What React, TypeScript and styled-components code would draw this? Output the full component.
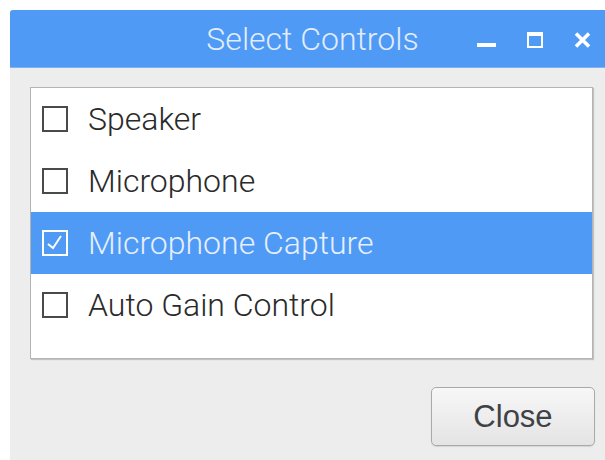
import styled, { createGlobalStyle } from 'styled-components';

const GlobalStyle = createGlobalStyle`
  html, body {
    margin: 0;
    padding: 0;
    background: #ffffff;
    overflow: hidden;
  }
  body {
    font-family: Roboto, "Noto Sans", sans-serif;
  }
`;

type Control = {
  label: string;
  checked: boolean;
};

const controls: Control[] = [
  { label: 'Speaker', checked: false },
  { label: 'Microphone', checked: false },
  { label: 'Microphone Capture', checked: true },
  { label: 'Auto Gain Control', checked: false },
];

export default function App() {
  return (
    <>
      <GlobalStyle />
      <Window>
        <TitleBar>
          <Title>Select Controls</Title>
          <WindowButtons>
            <WinButton aria-label="minimise">
              <svg width="19" height="16" viewBox="0 0 19 16">
                <rect x="0" y="11" width="19" height="4" fill="#ffffff" />
              </svg>
            </WinButton>
            <WinButton aria-label="maximise">
              <svg width="16" height="16" viewBox="0 0 16 16">
                <rect x="1" y="1" width="14" height="14" fill="none" stroke="#ffffff" strokeWidth="2" />
                <rect x="1" y="1" width="14" height="3" fill="#ffffff" />
              </svg>
            </WinButton>
            <WinButton aria-label="close">
              <svg width="17" height="16" viewBox="0 0 17 16">
                <path d="M2 1.5 L15 14.5 M15 1.5 L2 14.5" stroke="#ffffff" strokeWidth="3.6" strokeLinecap="butt" />
              </svg>
            </WinButton>
          </WindowButtons>
        </TitleBar>
        <Content>
          <List>
            {controls.map((c) => (
              <Row key={c.label} selected={c.checked}>
                <Box selected={c.checked}>
                  {c.checked && (
                    <svg width="20" height="20" viewBox="0 0 20 20">
                      <path d="M3 11 L8 15 L16 3" fill="none" stroke="#ffffff" strokeWidth="2" />
                    </svg>
                  )}
                </Box>
                <Label selected={c.checked}>{c.label}</Label>
              </Row>
            ))}
          </List>
          <Footer>
            <CloseButton>Close</CloseButton>
          </Footer>
        </Content>
      </Window>
    </>
  );
}

const Window = styled.div`
  margin: 10px 0 0 10px;
  width: 595px;
  height: 450px;
  background: #ededed;
  border-top-left-radius: 3px;
  overflow: hidden;
  display: flex;
  flex-direction: column;
`;

const TitleBar = styled.div`
  position: relative;
  height: 57px;
  background: #4e9af4;
  border-bottom: 1px solid #7fb4f0;
  display: flex;
  align-items: center;
  justify-content: center;
`;

const Title = styled.div`
  font-family: Roboto, sans-serif;
  font-size: 32px;
  font-weight: 300;
  color: #e2ecfc;
  margin-left: 10px;
`;

// minimise / maximise / close sit over the right end of the bar
const WindowButtons = styled.div`
  position: absolute;
  right: 14px;
  top: 22px;
  display: flex;
  align-items: center;
  gap: 31px;
`;

const WinButton = styled.div`
  display: flex;
  align-items: center;
  justify-content: center;
  line-height: 0;
`;

const Content = styled.div`
  flex: 1;
  padding: 19px 12px 0 20px;
  display: flex;
  flex-direction: column;
`;

const List = styled.div`
  height: 270px;
  background: #ffffff;
  border: 1px solid #b4b4b4;
  box-shadow: 1px 1px 1px rgba(0, 0, 0, 0.18);
  display: flex;
  flex-direction: column;
`;

const Row = styled.div<{ selected: boolean }>`
  height: 62px;
  display: flex;
  align-items: center;
  padding-left: 11px;
  background: ${({ selected }) => (selected ? '#4e9af4' : 'transparent')};
`;

const Box = styled.div<{ selected: boolean }>`
  width: 22px;
  height: 22px;
  box-sizing: content-box;
  border: 2px solid ${({ selected }) => (selected ? '#ffffff' : '#474b4b')};
  display: flex;
  align-items: center;
  justify-content: center;
  margin-right: 20px;
  margin-top: -1px;
`;

const Label = styled.span<{ selected: boolean }>`
  font-family: Roboto, sans-serif;
  font-size: 32px;
  font-weight: 300;
  color: ${({ selected }) => (selected ? '#e6effd' : '#2a2a2a')};
`;

const Footer = styled.div`
  display: flex;
  justify-content: flex-end;
  margin-top: 28px;
  margin-right: -2px;
`;

const CloseButton = styled.button`
  width: 164px;
  height: 59px;
  border: 1px solid #a9a9a9;
  border-radius: 5px;
  background: linear-gradient(#f7f7f7, #e4e4e4);
  box-shadow: 0 1px 1px rgba(0, 0, 0, 0.1);
  font-family: "Liberation Sans", Arial, sans-serif;
  font-size: 31px;
  color: #3e4246;
  padding: 0;
`;
